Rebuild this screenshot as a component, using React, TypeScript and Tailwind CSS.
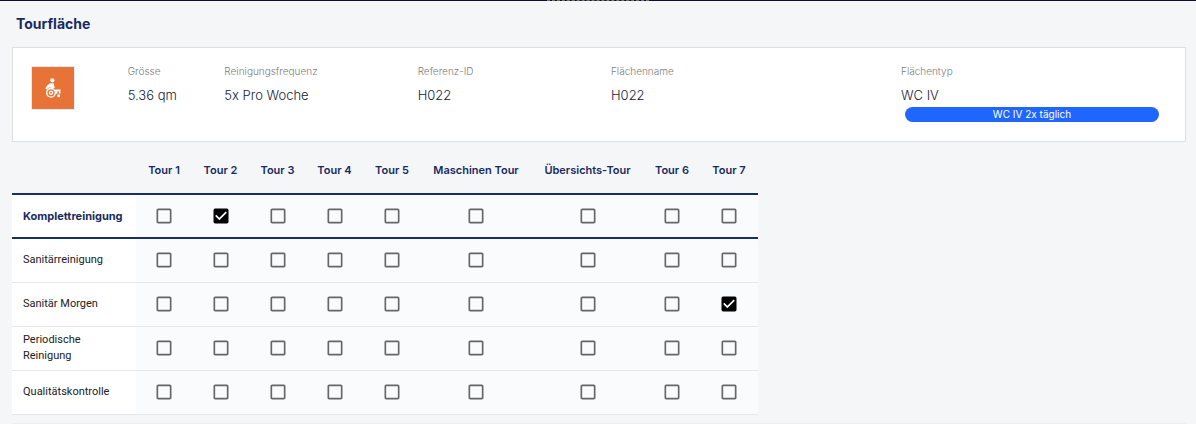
import React, { useState } from 'react';
import clsx from 'clsx';
import { MdCheckBox, MdCheckBoxOutlineBlank } from 'react-icons/md';

interface IField {
  label: string;
  value: string;
  span: string;
  tag?: string;
}

const fields: IField[] = [
  { label: 'Grösse', value: '5.36 qm', span: 'col-span-1' },
  { label: 'Reinigungsfrequenz', value: '5x Pro Woche', span: 'col-span-2' },
  { label: 'Referenz-ID', value: 'H022', span: 'col-span-2' },
  { label: 'Flächenname', value: 'H022', span: 'col-span-3' },
  { label: 'Flächentyp', value: 'WC IV', span: 'col-span-3', tag: 'WC IV 2x täglich' },
];

const tours = [
  { name: 'Tour 1', width: 'w-14' },
  { name: 'Tour 2', width: 'w-[57px]' },
  { name: 'Tour 3', width: 'w-[57px]' },
  { name: 'Tour 4', width: 'w-[57px]' },
  { name: 'Tour 5', width: 'w-[58px]' },
  { name: 'Maschinen Tour', width: 'w-[110px]' },
  { name: 'Übersichts-Tour', width: 'w-[113px]' },
  { name: 'Tour 6', width: 'w-14' },
  { name: 'Tour 7', width: 'w-[58px]' },
];

const services = [
  'Komplettreinigung',
  'Sanitärreinigung',
  'Sanitär Morgen',
  'Periodische Reinigung',
  'Qualitätskontrolle',
];

const WheelchairIcon = () => (
  <svg viewBox="0 0 16 20" className="w-4 h-5" fill="none" stroke="white" aria-hidden="true">
    <circle cx="7.3" cy="2.3" r="2.1" fill="white" stroke="none" />
    <path d="M5.2 5.2h3.4l1.2 4.8H6.4L4.4 9.2 1.4 11.6 0.4 10.8C1.2 8 3 6.2 5.2 5.2z" fill="white" stroke="none" />
    <circle cx="6" cy="14.8" r="4.3" strokeWidth="1.4" />
    <circle cx="6" cy="14.8" r="1.6" strokeWidth="1.3" />
    <path d="M10.2 12.3h4.4v3.2" strokeWidth="1.7" />
    <path d="M11.6 12.3v3.4" strokeWidth="1.5" />
    <circle cx="13.7" cy="17.8" r="1.5" fill="white" stroke="none" />
  </svg>
);

const AreaCard = () => {
  return (
    <section className="bg-white border border-[#dedfe0] pl-[18px] pt-[18px] pb-[19px]">
      <div className="grid grid-cols-12 -mr-[6px]">
        <div>
          <div className="flex items-center justify-center size-11 bg-[#e77436] border border-[#e9e9ef]">
            <WheelchairIcon />
          </div>
        </div>
        {fields.map((field) => (
          <div key={field.label} className={field.span}>
            <p className="text-[10px] leading-[11px] font-light text-[#7c7c7c]">{field.label}</p>
            <p className="mt-2.5 text-[13px] leading-[16px] font-light text-[#14213d]">{field.value}</p>
            {field.tag && (
              <div className="ml-1 mr-8 mt-1 rounded-full bg-[#1f66ff] text-white text-center text-[10px] leading-[15px]">
                {field.tag}
              </div>
            )}
          </div>
        ))}
      </div>
    </section>
  );
};

interface ICheckProps {
  label: string;
  checked: boolean;
  onChange: () => void;
}

const Check = ({ label, checked, onChange }: ICheckProps) => {
  return (
    <span className="inline-grid size-5 align-middle">
      <input
        type="checkbox"
        aria-label={label}
        checked={checked}
        onChange={onChange}
        className="appearance-none col-start-1 row-start-1 size-5 cursor-pointer"
      />
      {checked ? (
        <MdCheckBox className="col-start-1 row-start-1 size-5 text-black pointer-events-none" />
      ) : (
        <MdCheckBoxOutlineBlank className="col-start-1 row-start-1 size-5 text-[#666666] pointer-events-none" />
      )}
    </span>
  );
};

const TourTable = () => {
  const [selected, setSelected] = useState<string[]>(['0-1', '2-8']);

  const toggle = (key: string) => {
    setSelected((prev) => (prev.includes(key) ? prev.filter((k) => k !== key) : [...prev, key]));
  };

  return (
    <table className="table-fixed w-[746px] border-collapse mt-1">
      <thead>
        <tr className="h-12 border-b-2 border-[#172f66]">
          <td className="w-[124px]" />
          {tours.map((tour) => (
            <th
              key={tour.name}
              scope="col"
              className={clsx(
                'text-[11px] leading-[16px] font-semibold text-[#172b62] whitespace-nowrap',
                tour.width,
              )}>
              {tour.name}
            </th>
          ))}
        </tr>
      </thead>
      <tbody>
        {services.map((service, row) => (
          <tr
            key={service}
            className={clsx('h-11', {
              'border-b-2 border-[#172f66]': row === 0,
              'border-b border-[#e5e7ea]': row > 0,
            })}>
            <th
              scope="row"
              className={clsx('bg-white pl-[11px] text-left text-[11px] leading-[16px]', {
                'pr-2.5 font-bold text-[#172b62]': row === 0,
                'pr-7 font-normal text-[#212121] font-[family-name:Roboto]': row > 0,
              })}>
              {service}
            </th>
            {tours.map((tour, col) => {
              const key = `${row}-${col}`;
              return (
                <td key={tour.name} className="bg-[#fafbfd] text-center leading-none">
                  <Check
                    label={`${service} – ${tour.name}`}
                    checked={selected.includes(key)}
                    onChange={() => toggle(key)}
                  />
                </td>
              );
            })}
          </tr>
        ))}
      </tbody>
    </table>
  );
};

const App = () => {
  return (
    <div className="min-h-screen bg-[#f5f6f8] font-['Inter',sans-serif]">
      <header className="flex justify-center h-px bg-[#0a0f2c]">
        <div className="w-[102px] border-t border-dashed border-[#77716f]" />
      </header>
      <main className="pl-3 pr-2.5">
        <h1 className="pl-1 pt-3.5 pb-3.5 text-[14px] leading-[18px] font-bold text-[#172b62]">Tourfläche</h1>
        <AreaCard />
        <TourTable />
        <div className="mt-2 border-t border-[#eceef0]" />
      </main>
    </div>
  );
};

export default App;
